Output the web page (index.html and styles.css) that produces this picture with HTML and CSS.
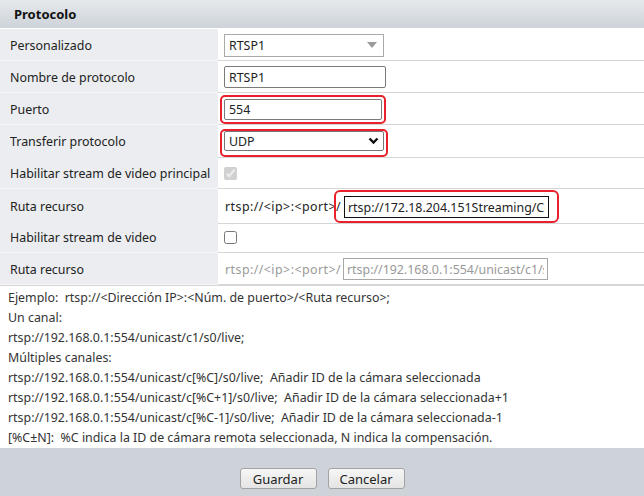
FILE: index.html
```html
<!DOCTYPE html>
<html lang="es">
<head>
    <meta charset="UTF-8">
    <meta name="viewport" content="width=device-width, initial-scale=1.0">
    <title>Protocolo</title>
    <link rel="stylesheet" href="styles.css">
</head>
<body>
    <div class="dialog">
        <div class="title">Protocolo</div>
        <div class="rows">
            <div class="row">
                <div class="label">Personalizado</div>
                <div class="value">
                    <div class="select">
                        <span>RTSP1</span>
                        <svg width="10" height="6" viewBox="0 0 10 6"><path d="M0 0H10L5 6Z" fill="#9a9a9a"/></svg>
                    </div>
                </div>
            </div>
            <div class="row">
                <div class="label">Nombre de protocolo</div>
                <div class="value"><input type="text" class="field" value="RTSP1"></div>
            </div>
            <div class="row">
                <div class="label">Puerto</div>
                <div class="value">
                    <span class="mark"><input type="text" class="field port" value="554"></span>
                </div>
            </div>
            <div class="row">
                <div class="label">Transferir protocolo</div>
                <div class="value">
                    <span class="mark mark-udp">
                        <div class="select dark">
                            <span>UDP</span>
                            <svg width="11" height="8" viewBox="0 0 11 8"><path d="M1.5 1.5L5.5 5.5L9.5 1.5" fill="none" stroke="#111" stroke-width="2.4"/></svg>
                        </div>
                    </span>
                </div>
            </div>
            <div class="row">
                <div class="label">Habilitar stream de video principal</div>
                <div class="value"><input type="checkbox" class="check" checked disabled></div>
            </div>
            <div class="row">
                <div class="label">Ruta recurso</div>
                <div class="value">
                    <span class="prefix">rtsp://&lt;ip&gt;:&lt;port&gt;/</span>
                    <span class="mark mark-path"><input type="text" class="field path" value="rtsp://172.18.204.151Streaming/Channels/101"></span>
                </div>
            </div>
            <div class="row">
                <div class="label">Habilitar stream de video</div>
                <div class="value"><input type="checkbox" class="check"></div>
            </div>
            <div class="row">
                <div class="label">Ruta recurso</div>
                <div class="value">
                    <span class="prefix off">rtsp://&lt;ip&gt;:&lt;port&gt;/</span>
                    <input type="text" class="field path off" value="rtsp://192.168.0.1:554/unicast/c1/s0/live" disabled>
                </div>
            </div>
        </div>
        <div class="help">
            <p>Ejemplo:&nbsp; rtsp://&lt;Dirección IP&gt;:&lt;Núm. de puerto&gt;/&lt;Ruta recurso&gt;;</p>
            <p>Un canal:</p>
            <p>rtsp://192.168.0.1:554/unicast/c1/s0/live;</p>
            <p>Múltiples canales:</p>
            <p>rtsp://192.168.0.1:554/unicast/c[%C]/s0/live;&nbsp; Añadir ID de la cámara seleccionada</p>
            <p>rtsp://192.168.0.1:554/unicast/c[%C+1]/s0/live;&nbsp; Añadir ID de la cámara seleccionada+1</p>
            <p>rtsp://192.168.0.1:554/unicast/c[%C-1]/s0/live;&nbsp; Añadir ID de la cámara seleccionada-1</p>
            <p>[%C±N]:&nbsp; %C indica la ID de cámara remota seleccionada, N indica la compensación.</p>
        </div>
        <div class="footer">
            <button type="button" class="btn">Guardar</button>
            <button type="button" class="btn">Cancelar</button>
        </div>
    </div>
</body>
</html>
```

FILE: styles.css
```css
body {
    margin: 0;
    font-family: "Noto Sans", "Open Sans", sans-serif;
    font-size: 12.4px;
    color: #222;
    background-color: #fff;
}
.dialog {
    width: 644px;
    height: 496px;
    display: flex;
    flex-direction: column;
}
.title {
    height: 28px;
    line-height: 28px;
    padding-left: 14px;
    font-size: 13px;
    font-weight: bold;
    color: #111;
    background: linear-gradient(#e6e9ec, #cdd3d9);
    border-bottom: 1px solid #fff;
}
.row {
    display: grid;
    grid-template-columns: 218px 1fr;
    height: 32px;
}
.label {
    background-color: #ebedf0;
    border-bottom: 1px solid #f7f7f7;
    padding: 1px 0 0 10px;
    display: flex;
    align-items: center;
    white-space: nowrap;
}
.value {
    border-bottom: 1px solid #d6d6d6;
    padding: 1px 0 0 6px;
    display: flex;
    align-items: center;
}
.select {
    width: 160px;
    height: 23px;
    box-sizing: border-box;
    border: 1px solid #a9a9a9;
    display: flex;
    align-items: center;
    justify-content: space-between;
    padding: 0 6px 0 4px;
    background-color: #fff;
}
.select.dark {
    border-color: #777;
    border-radius: 2px;
    height: 20px;
    width: 160px;
    padding-right: 4px;
}
.field {
    font-family: inherit;
    font-size: 12.4px;
    color: #222;
    height: 22px;
    width: 162px;
    box-sizing: border-box;
    border: 1px solid #7a7a7a;
    border-radius: 2px;
    padding: 0 4px;
    margin: 0;
    outline: none;
}
.field.port {
    width: 158px;
    height: 21px;
}
.mark {
    display: inline-flex;
    border: 2px solid #e8212b;
    border-radius: 5px;
    padding: 2px;
    margin-left: -4px;
}
.mark-udp {
    padding: 0 2px 4px 2px;
    margin-top: 3px;
}
.mark-path {
    margin-left: -8px;
    padding: 4px 8px 3px 8px;
    border-radius: 6px;
}
.field.path {
    width: 205px;
    height: 22px;
    border: 1px solid #111;
    border-radius: 0;
    padding: 0 3px;
}
.field.path.off {
    border-color: #a8a8a8;
    color: #999;
    background-color: #fff;
    margin-left: 1px;
}
.prefix {
    display: inline-block;
    width: 117px;
    padding-left: 1px;
    letter-spacing: 0.45px;
    white-space: nowrap;
}
.prefix.off {
    color: #999;
}
.check {
    width: 13px;
    height: 13px;
    margin: 0;
}
.help {
    flex: none;
    height: 160px;
    padding: 2px 0 0 8px;
    border-top: 1px solid #d6d6d6;
    color: #333;
}
.help p {
    margin: 0;
    line-height: 20px;
    white-space: nowrap;
}
.footer {
    flex: 1;
    background-color: #cdd3d9;
    display: flex;
    justify-content: center;
    align-items: flex-start;
    gap: 11px;
    padding-top: 20px;
}
.btn {
    width: 77px;
    height: 21px;
    padding: 0;
    font-family: inherit;
    font-size: 13px;
    color: #222;
    border: 1px solid #a3a3a3;
    border-radius: 3px;
    background: linear-gradient(#f6f6f6, #e4e4e4);
    cursor: pointer;
}
```
